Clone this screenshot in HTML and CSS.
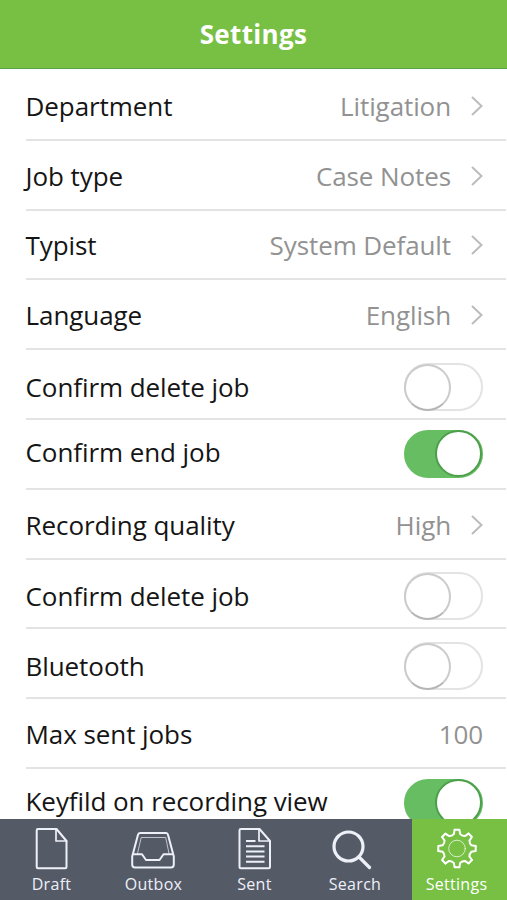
FILE: index.html
```html
<!DOCTYPE html>
<html lang="en">
<head>
<meta charset="utf-8">
<title>Settings</title>
<link rel="stylesheet" href="styles.css">
</head>
<body>
<div class="app">
  <header class="header"><h1>Settings</h1></header>
  <main class="list">
    <div class="row row-first"><span class="label">Department</span><span class="value">Litigation</span><svg class="chevron" viewBox="0 0 12 20"><path d="M1 1l9.500 9L1 19"/></svg></div>
    <div class="row"><span class="label">Job type</span><span class="value">Case Notes</span><svg class="chevron" viewBox="0 0 12 20"><path d="M1 1l9.500 9L1 19"/></svg></div>
    <div class="row"><span class="label">Typist</span><span class="value">System Default</span><svg class="chevron" viewBox="0 0 12 20"><path d="M1 1l9.500 9L1 19"/></svg></div>
    <div class="row"><span class="label">Language</span><span class="value">English</span><svg class="chevron" viewBox="0 0 12 20"><path d="M1 1l9.500 9L1 19"/></svg></div>
    <div class="row row-low"><span class="label">Confirm delete job</span><span class="switch"><span class="knob"></span></span></div>
    <div class="row row-high"><span class="label">Confirm end job</span><span class="switch on"><span class="knob"></span></span></div>
    <div class="row"><span class="label">Recording quality</span><span class="value">High</span><svg class="chevron" viewBox="0 0 12 20"><path d="M1 1l9.500 9L1 19"/></svg></div>
    <div class="row row-low"><span class="label">Confirm delete job</span><span class="switch"><span class="knob"></span></span></div>
    <div class="row row-low"><span class="label">Bluetooth</span><span class="switch"><span class="knob"></span></span></div>
    <div class="row"><span class="label">Max sent jobs</span><span class="value value-end">100</span></div>
    <div class="row row-high"><span class="label">Keyfild on recording view</span><span class="switch on"><span class="knob"></span></span></div>
  </main>
  <nav class="tabs">
    <div class="tab">
      <svg class="icon" viewBox="0 0 46 46"><path d="M9 3h18.500l10 12v26q0 1.300-1.300 1.300H9q-1.300 0-1.300-1.300V4.300Q7.700 3 9 3z"/><path class="thin" d="M27 3.500V15h10.500"/></svg>
      <span>Draft</span>
    </div>
    <div class="tab">
      <svg class="icon" viewBox="0 0 46 46"><path d="M9.500 7h25.500q1.700 0 2 1.700l5.800 21.800v8q0 3-2.800 3H4q-2.800 0-2.800-3v-8L7 8.700Q7.500 7 9.500 7z"/><path d="M3 28.300h8l4 5.700h13.500l4-5.700h8.500"/><path class="faint" d="M6.500 27.500L10.200 11.500h24.500L38 27.500"/></svg>
      <span>Outbox</span>
    </div>
    <div class="tab">
      <svg class="icon" viewBox="0 0 46 46"><path d="M9 3h18.500l10.500 12v26q0 1.300-1.300 1.300H8.800q-1.300 0-1.300-1.300V4.300Q7.500 3 9 3z"/><path class="thin" d="M27 3.500V15h10.500"/><path class="lines" d="M14 15h9.500M14 20.200h18.500M14 25.500h18.500M14 30.500h18.500M14 35.800h18.500"/></svg>
      <span>Sent</span>
    </div>
    <div class="tab">
      <svg class="icon search" viewBox="0 0 46 46"><circle cx="16.500" cy="20.500" r="14.500"/><path d="M27 31l10.500 10.500"/></svg>
      <span>Search</span>
    </div>
    <div class="tab active">
      <svg class="icon" viewBox="-23 -22.500 46 46">
        <defs><path id="tooth" d="M-2.400 -18.700H2.400L3.200 -14.400Q5.400 -12.300 7.900 -12.400L11.500 -14.900"/></defs>
        <use href="#tooth"/><use href="#tooth" transform="rotate(45)"/><use href="#tooth" transform="rotate(90)"/><use href="#tooth" transform="rotate(135)"/><use href="#tooth" transform="rotate(180)"/><use href="#tooth" transform="rotate(225)"/><use href="#tooth" transform="rotate(270)"/><use href="#tooth" transform="rotate(315)"/>
        <circle class="faint" r="8.300"/>
      </svg>
      <span>Settings</span>
    </div>
  </nav>
</div>
</body>
</html>
```
FILE: styles.css
```css
* { box-sizing: border-box; }
body { margin: 0; background: #fff; font-family: "Open Sans", "Noto Sans", sans-serif; }
.app { width: 507px; height: 900px; display: flex; flex-direction: column; overflow: hidden; }
.header { flex: none; height: 69px; background: #77c044; border-bottom: 1px solid #5ba344; display: flex; align-items: center; justify-content: center; }
.header h1 { margin: 0; color: #fff; font-size: 26px; font-weight: 700; line-height: 36px; letter-spacing: .35px; }
.list { flex: 1; min-height: 0; overflow: hidden; padding-left: 25.500px; }
.row { height: 69.800px; margin-right: 1px; padding: 2px 23px 0 0; border-bottom: 2px solid #e3e3e4; display: flex; align-items: center; }
.row-first { height: 71.800px; padding-top: 5px; }
.label { flex: 1; font-size: 26px; line-height: 36px; letter-spacing: -.07px; color: #151515; white-space: nowrap; }
.value { font-size: 26px; line-height: 36px; letter-spacing: -.1px; color: #929292; margin-right: 20px; }
.value-end { margin-right: 0; }
.chevron { width: 12px; height: 20px; fill: none; stroke: #bcbcbc; stroke-width: 2; }
.row-low { padding-top: 6px; }
.row-high { padding-top: 0; }
.row-high .label { padding-bottom: 4px; }
.switch { width: 79px; height: 48px; border-radius: 24px; border: 2px solid #e3e3e3; display: flex; align-items: center; }
.knob { width: 47px; height: 47px; flex: none; margin-left: -2px; border-radius: 50%; background: #fff; border: 2px solid #cbcbcb; border-bottom-color: #b5b5b5; }
.on { background: #66bd62; border-color: #66bd62; justify-content: flex-end; }
.on .knob { margin: 0 -1px 0 0; border-color: #4e9f4b; }
.tabs { flex: none; height: 81px; display: flex; background: #555a67; color: #eef0f8; }
.tab { flex: 0 0 101px; display: flex; flex-direction: column; align-items: center; padding-top: 7px; font-size: 16px; line-height: 24px; letter-spacing: .3px; }
.tab:first-child { flex-basis: 103px; }
.tab:nth-child(4) { flex-basis: 107px; padding-right: 7px; }
.tab.active { flex: 1; background: #77c044; color: #fff; padding-right: 6px; }
.icon { width: 46px; height: 46px; flex: none; fill: none; stroke: currentColor; stroke-width: 2; stroke-linejoin: round; stroke-linecap: round; }
.thin { stroke-width: 1.700; }
.lines { stroke-linecap: butt; }
.faint { stroke-width: 1; opacity: .7; }
.search { stroke-width: 3.200; }
```
